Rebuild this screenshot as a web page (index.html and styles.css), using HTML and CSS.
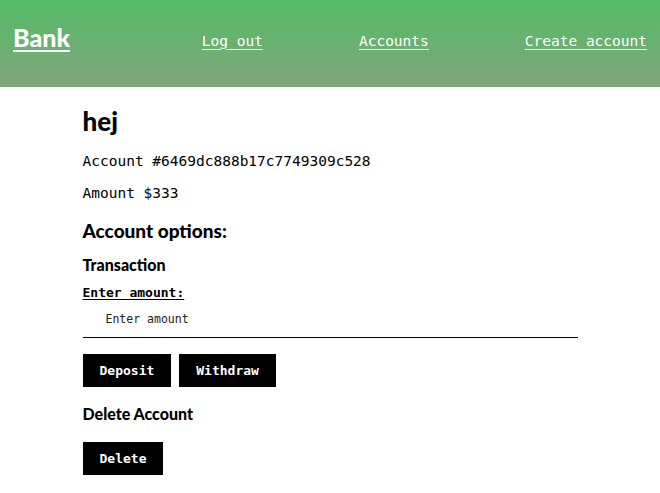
FILE: index.html
```html
<!DOCTYPE html>
<html lang="en">
<head>
<meta charset="utf-8">
<title>Bank</title>
<link rel="stylesheet" href="styles.css">
</head>
<body>
<header class="topbar">
  <a class="brand" href="#">Bank</a>
  <nav class="nav">
    <a class="nav-link" href="#">Log out</a>
    <a class="nav-link" href="#">Accounts</a>
    <a class="nav-link" href="#">Create account</a>
  </nav>
</header>
<main class="content">
  <h1 class="title">hej</h1>
  <p class="info info-first">Account #6469dc888b17c7749309c528</p>
  <p class="info">Amount $333</p>
  <h2 class="section">Account options:</h2>
  <h3 class="sub">Transaction</h3>
  <label class="field-label" for="amount">Enter amount:</label>
  <input class="field" id="amount" type="text" placeholder="Enter amount">
  <div class="actions">
    <button class="btn" type="button">Deposit</button>
    <button class="btn" type="button">Withdraw</button>
  </div>
  <h3 class="sub sub-delete">Delete Account</h3>
  <div class="actions actions-delete">
    <button class="btn" type="button">Delete</button>
  </div>
</main>
</body>
</html>
```
FILE: styles.css
```css
* { box-sizing: border-box; }
html, body { margin: 0; padding: 0; background: #fff; }
body { font-family: "DejaVu Sans Mono", monospace; color: #000; }

.topbar {
  height: 87px;
  background: linear-gradient(to bottom, #54bb67, #80a67b);
  display: flex;
  align-items: center;
  justify-content: space-between;
  padding: 0 13px;
}
.brand {
  font-family: Lato, "DejaVu Sans", sans-serif;
  font-weight: 900;
  font-size: 25px;
  color: #fff;
  text-decoration: underline;
  text-underline-offset: 3px;
  text-decoration-thickness: 2px;
  margin-top: -13px;
}
.nav { display: flex; gap: 96px; }
.nav-link {
  font-family: "DejaVu Sans Mono", monospace;
  font-size: 14.5px;
  color: #fff;
  text-decoration: underline;
  text-underline-offset: 3px;
  margin-top: -6px;
}

.content { width: 75%; margin: 0 auto; display: flex; flex-direction: column; align-items: flex-start; }

.title {
  font-family: Lato, sans-serif; font-weight: 900; font-size: 26px;
  line-height: 32px; margin: 18px 0 0;
}
.info { font-size: 14.5px; line-height: 18px; margin: 14px 0 0; }
.info-first { margin-top: 15px; }
.section {
  font-family: Lato, sans-serif; font-weight: 900; font-size: 19px;
  line-height: 24px; margin: 17px 0 0;
}
.sub {
  font-family: Lato, sans-serif; font-weight: 900; font-size: 16px;
  line-height: 20px; margin: 12px 0 0;
}
.field-label {
  font-size: 13px; line-height: 16px; margin-top: 10px; font-weight: bold;
  text-decoration: underline; text-underline-offset: 2px;
}
.field {
  align-self: stretch;
  margin-top: 0;
  height: 37px;
  border: none;
  border-bottom: 1px solid #000;
  padding: 0 23px;
  font-family: "DejaVu Sans Mono", monospace;
  font-size: 11.5px;
  outline: none;
}
.field::placeholder { color: #222; }
.actions { display: flex; gap: 8px; margin-top: 16px; }
.btn {
  background: #000; color: #fff; border: none;
  height: 33px; padding: 0 17px;
  font-family: "DejaVu Sans Mono", monospace; font-weight: bold; font-size: 13px;
}
.sub-delete { margin-top: 17px; }
.actions-delete { margin-top: 18px; }
```
